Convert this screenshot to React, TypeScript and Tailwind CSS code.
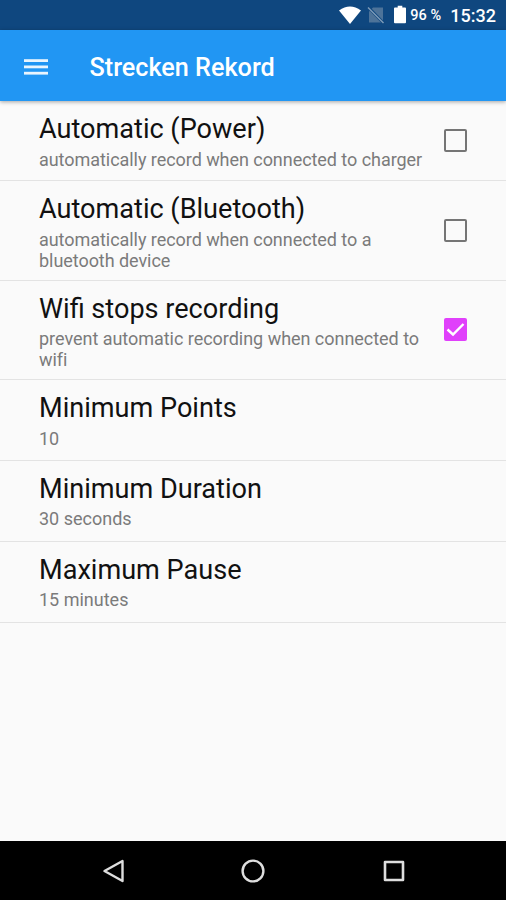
import React, { useState } from 'react';
import clsx from 'clsx';

type Preference = {
  id: string;
  title: string;
  lines: string[];
  rowClass: string;
  summaryClass?: string;
  checkable?: boolean;
};

const preferences: Preference[] = [
  {
    id: 'power',
    title: 'Automatic (Power)',
    lines: ['automatically record when connected to charger'],
    rowClass: 'h-20',
    checkable: true,
  },
  {
    id: 'bluetooth',
    title: 'Automatic (Bluetooth)',
    lines: ['automatically record when connected to a', 'bluetooth device'],
    rowClass: 'h-[100px]',
    checkable: true,
  },
  {
    id: 'wifi',
    title: 'Wifi stops recording',
    lines: ['prevent automatic recording when connected to', 'wifi'],
    rowClass: 'h-[99px]',
    summaryClass: 'mt-[3px] tracking-[-0.03px]',
    checkable: true,
  },
  { id: 'points', title: 'Minimum Points', lines: ['10'], rowClass: 'h-[81px]' },
  { id: 'duration', title: 'Minimum Duration', lines: ['30 seconds'], rowClass: 'h-[81px]', summaryClass: 'mt-[3px]' },
  { id: 'pause', title: 'Maximum Pause', lines: ['15 minutes'], rowClass: 'h-[81px]', summaryClass: 'mt-[3px]' },
];

const StatusBar: React.FC = () => (
  <div className="flex h-[30px] shrink-0 items-center justify-end bg-[#0f477f] pr-[10px] text-white">
    <svg className="h-[18px] w-[22px]" viewBox="0 0 22 18" fill="currentColor">
      <path d="M0 4.5Q11-3.5 22 4.5L11 18Z" />
    </svg>
    <svg className="ml-[6px] h-[18px] w-[18px]" viewBox="0 0 18 18">
      <path d="M6 1.5H16V16.5H2V5.5Z" fill="#4d7399" />
      <path d="M1 1L17 17.5" stroke="#0f477f" strokeWidth="3" />
      <path d="M1 1.5L16.5 17" stroke="#7f9cb9" strokeWidth="1.4" />
    </svg>
    <svg className="-mt-px ml-[9px] h-[19px] w-[12px]" viewBox="0 0 13 19" fill="currentColor">
      <path d="M4 0H9V2H12Q13 2 13 3V18Q13 19 12 19H1Q0 19 0 18V3Q0 2 1 2H4Z" />
    </svg>
    <span className="ml-[4px] mt-[2px] w-[31px] whitespace-nowrap text-[14.5px] leading-none font-medium">96 %</span>
    <span className="ml-[9px] mt-[2px] text-[18px] leading-none font-medium">15:32</span>
  </div>
);

const AppBar: React.FC = () => (
  <header className="z-10 flex h-[71px] shrink-0 items-center bg-[#2196f3] pl-6 text-white shadow-[0_1px_4px_rgba(0,0,0,0.35)]">
    <button aria-label="Menu">
      <svg className="mt-[2px] h-4 w-6" viewBox="0 0 24 16" fill="#e9f5fe">
        <rect y="0.2" width="24" height="2.8" />
        <rect y="6.5" width="24" height="2.8" />
        <rect y="12.8" width="24" height="2.8" />
      </svg>
    </button>
    <h1 className="ml-[41.5px] mt-[4px] text-[25.2px] leading-none font-medium">Strecken Rekord</h1>
  </header>
);

const Checkbox: React.FC<{ checked: boolean; onClick: () => void }> = ({ checked, onClick }) => (
  <button
    role="checkbox"
    aria-checked={checked}
    onClick={onClick}
    className={clsx(
      'mr-[39px] size-[23px] shrink-0 rounded-[2px]',
      checked ? '-mt-px bg-[#e040fb]' : 'border-2 border-[#757575]'
    )}
  >
    {checked && (
      <svg className="size-[23px]" viewBox="0 0 23 23" fill="none">
        <path d="M3.5 11.5L9 16.5L19.5 6" stroke="#fff" strokeWidth="2.4" />
      </svg>
    )}
  </button>
);

const NavigationBar: React.FC = () => (
  <nav className="flex h-[59px] shrink-0 items-center justify-center gap-[116px] bg-black">
    <svg className="size-6" viewBox="0 0 24 24" fill="none" stroke="#dedede" strokeWidth="2.4" strokeLinejoin="round">
      <path d="M21.5 2V22L3.5 12Z" />
    </svg>
    <svg className="size-6" viewBox="0 0 24 24" fill="none" stroke="#dedede" strokeWidth="2.4">
      <circle cx="12" cy="12" r="10.4" />
    </svg>
    <svg className="size-6" viewBox="0 0 24 24" fill="none" stroke="#dedede" strokeWidth="2.6" strokeLinejoin="round">
      <rect x="4" y="3" width="18" height="18" />
    </svg>
  </nav>
);

export default function App() {
  const [checked, setChecked] = useState<Record<string, boolean>>({ wifi: true });

  const toggle = (id: string) => setChecked((prev) => ({ ...prev, [id]: !prev[id] }));

  return (
    <div className="flex h-[900px] w-[506px] flex-col overflow-hidden bg-[#fafafa] font-['Roboto',sans-serif]">
      <StatusBar />
      <AppBar />
      <main className="flex-1">
        {preferences.map((pref) => (
          <div
            key={pref.id}
            className={clsx('flex items-center border-b-[1.5px] border-[#e3e3e3] pl-[39px]', pref.rowClass)}
          >
            <div className="flex-1 self-start whitespace-nowrap pt-[13px]">
              <div className="text-[27.1px] leading-[31px] text-[#111]">{pref.title}</div>
              <div
                className={clsx(
                  'text-[18px] leading-[21px] text-[#7b7b7b]',
                  pref.summaryClass ?? 'mt-[4px] tracking-[-0.05px]'
                )}
              >
                {pref.lines.map((line) => (
                  <div key={line}>{line}</div>
                ))}
              </div>
            </div>
            {pref.checkable && <Checkbox checked={!!checked[pref.id]} onClick={() => toggle(pref.id)} />}
          </div>
        ))}
      </main>
      <NavigationBar />
    </div>
  );
}
